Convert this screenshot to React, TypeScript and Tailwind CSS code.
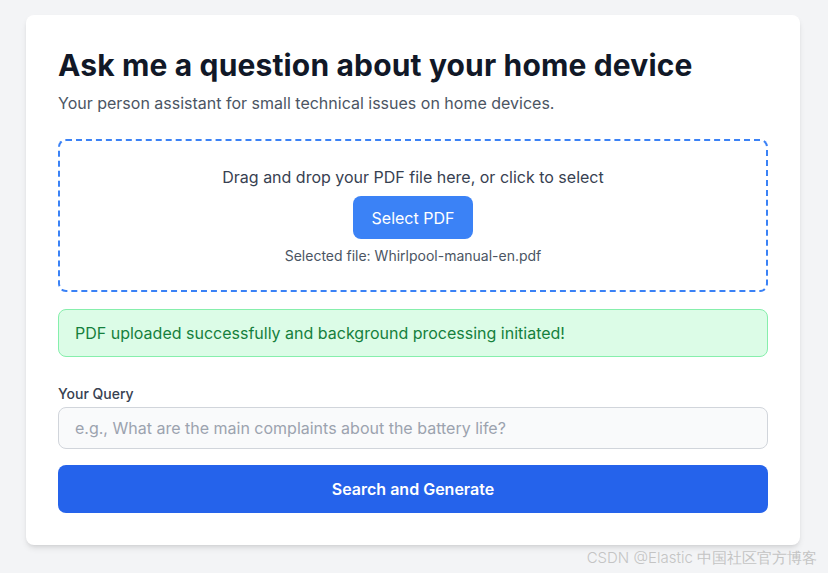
import { useState } from 'react';

export default function App() {
  const [query, setQuery] = useState('');

  return (
    <div className="relative min-h-[573px] bg-[#f3f4f6] pt-[15px] font-['Inter',sans-serif]">
      <div className="ml-[26px] w-[774px] rounded-lg bg-white p-8 shadow-md">
        <h1 className="text-3xl font-bold tracking-[0.005em] text-[#111827]">Ask me a question about your home device</h1>
        <p className="mt-2 text-base text-[#4b5563]">Your person assistant for small technical issues on home devices.</p>

        <div className="mt-6 flex flex-col items-center rounded-lg border-2 border-dashed border-[#3b82f6] p-6 text-center">
          <p className="text-base text-[#374151]">Drag and drop your PDF file here, or click to select</p>
          <button className="mt-[7px] h-[43px] rounded-lg bg-[#3b82f6] px-[19px] text-base text-white">Select PDF</button>
          <p className="mt-[7px] text-sm text-[#4b5563]">Selected file: Whirlpool-manual-en.pdf</p>
        </div>

        <div className="mt-[17px] rounded-lg border border-[#86efac] bg-[#dcfce7] px-4 py-[11px] text-base text-[#15803d]">
          PDF uploaded successfully and background processing initiated!
        </div>

        <label className="mt-[27px] block text-sm font-medium text-[#374151]">Your Query</label>
        <input
          value={query}
          onChange={(e) => setQuery(e.target.value)}
          placeholder="e.g., What are the main complaints about the battery life?"
          className="mt-[3px] h-[42px] w-full rounded-lg border border-[#d1d5db] bg-[#f9fafb] px-4 text-base text-[#111827] placeholder:text-[#9ca3af] outline-none"
        />

        <button className="mt-4 h-12 w-full rounded-lg bg-[#2563eb] text-base font-semibold text-white">
          Search and Generate
        </button>
      </div>

      <span className="absolute right-[11px] top-[547px] text-[15px] font-light text-[#c4c4c4]">CSDN @Elastic 中国社区官方博客</span>
    </div>
  );
}
